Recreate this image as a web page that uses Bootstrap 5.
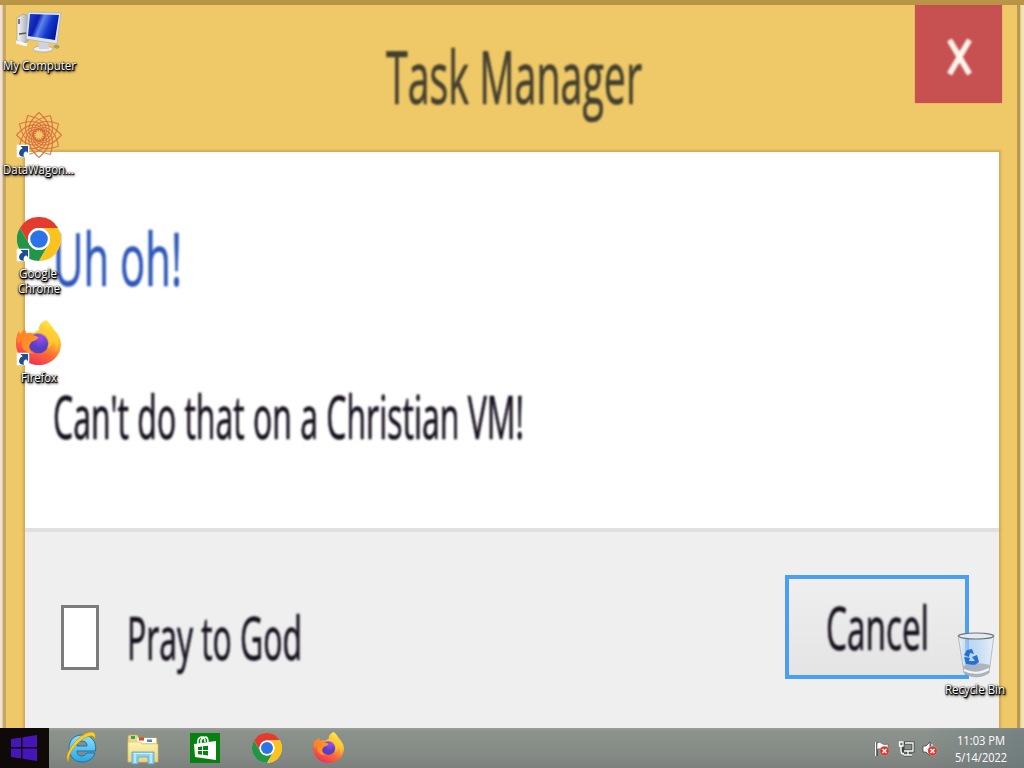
<!DOCTYPE html>
<html lang="en">
<head>
<meta charset="utf-8">
<title>Desktop</title>
<link rel="stylesheet" href="https://cdn.jsdelivr.net/npm/bootstrap@5.3.0/dist/css/bootstrap.min.css">
<style>
body{width:1024px;height:768px;font-family:"Open Sans","Noto Sans",sans-serif;background:#f3e6d2}
svg{display:block;overflow:visible}
.win{height:728px;border-top:5px solid #bd9b48;border-image:linear-gradient(#b99546,#c3a04c) 1;padding:0 4px 0 3px;background:linear-gradient(90deg,#f1e3da 0 4px,transparent 4px 1019px,#f0e3b4 1019px)}
.frame{background:#efc967;border-left:3px solid #c9a562;border-right:3px solid #b99752;padding:0 18px 0 19px;box-shadow:0 0 2px #b7924a}
.titlebar{height:147px}
.close-btn{width:87px;height:98px;margin-right:-3px;background:#c75050;border:0;border-radius:0;box-shadow:0 0 1px #c97b50}
.content-pane{height:376px;background:#fff;box-shadow:0 0 2px 2px #d2aa55}
.foot-pane{background:#efefef;border-top:4px solid #e0e0e0;box-shadow:0 2px 2px 2px #d2aa55;clip-path:inset(0 -4px 0 -4px)}
.big text{font-family:"Open Sans","Noto Sans",sans-serif;stroke-width:.7px}
.big{filter:blur(.9px)}
.tick{width:38px;height:65px;margin-left:1px;border:3px solid #7b7b7b;background:#fff;filter:blur(.7px)}
.cancel-btn{width:184px;height:104px;border:4px solid #4a9ff5;border-radius:0;background:linear-gradient(#efefef,#e4e4e4);filter:blur(.7px)}
.shortcut{width:78px}
.shortcut text,.tray text{font-size:12px;fill:#fff;font-family:"Open Sans","Noto Sans",sans-serif}
.shortcut text{text-shadow:1px 1px 1px #000,0 1px 1px #000,0 0 2px #000,1px 1px 2px #000,1px 2px 3px #000}
.taskbar{height:40px;background:linear-gradient(90deg,rgba(110,118,116,0),rgba(110,118,116,0) 90%,rgba(95,112,120,.5)),linear-gradient(#9aa09a 0,#8c938d 3px,#848b85 65%,#7c807d)}
.start{width:49px;background:#0f0908}
</style>
</head>
<body class="m-0 overflow-hidden position-relative">
<svg width="0" height="0" class="position-absolute">
<defs>
<linearGradient id="scr" x1="0" y1="0" x2="1" y2=".35"><stop offset="0" stop-color="#2547d2"/><stop offset=".35" stop-color="#0b1fb0"/><stop offset=".5" stop-color="#5d85ec"/><stop offset=".75" stop-color="#1238cb"/><stop offset="1" stop-color="#0619a0"/></linearGradient>
<linearGradient id="grey" x1="0" x2="1"><stop offset="0" stop-color="#fafafa"/><stop offset="1" stop-color="#a6aab2"/></linearGradient>
<linearGradient id="ffb" x1=".8" y1="0" x2=".3" y2="1"><stop offset="0" stop-color="#fff04a"/><stop offset=".35" stop-color="#ffbd2e"/><stop offset=".65" stop-color="#ff6b35"/><stop offset="1" stop-color="#f02a5a"/></linearGradient>
<linearGradient id="ffo" x1="0" y1="0" x2="1" y2="1"><stop offset="0" stop-color="#ff7a25"/><stop offset="1" stop-color="#ffa02c"/></linearGradient>
<radialGradient id="ffp" cx=".6" cy=".25"><stop offset="0" stop-color="#a44bed"/><stop offset="1" stop-color="#5340c4"/></radialGradient>
<linearGradient id="ieg" x1="0" y1="0" x2="0" y2="1"><stop offset="0" stop-color="#8ee2fb"/><stop offset="1" stop-color="#2aa5e3"/></linearGradient>
<linearGradient id="ylw" x1="0" y1="0" x2="0" y2="1"><stop offset="0" stop-color="#fdf3b0"/><stop offset="1" stop-color="#eed374"/></linearGradient>
<linearGradient id="glass" x1="0" x2="1"><stop offset="0" stop-color="#eef4fb" stop-opacity=".8"/><stop offset=".35" stop-color="#9cc6f6" stop-opacity=".6"/><stop offset="1" stop-color="#eaf1fa" stop-opacity=".9"/></linearGradient>
<symbol id="chrome" viewBox="0 0 48 48">
<circle cx="24" cy="24" r="23.500" fill="#fff"/>
<path d="M3.200 12A24 24 0 0 1 44.800 12H24A12 12 0 0 0 13.600 30Z" fill="#e33b2e"/>
<path d="M3.200 12A24 24 0 0 0 24 48L34.400 30A12 12 0 0 1 13.600 30Z" fill="#229648"/>
<path d="M44.800 12A24 24 0 0 1 24 48L34.400 30A12 12 0 0 0 24 12Z" fill="#fcc31e"/>
<circle cx="24" cy="24" r="12" fill="#fff"/><circle cx="24" cy="24" r="9.600" fill="#2d73e8"/>
</symbol>
<symbol id="fox" viewBox="0 0 48 48">
<path d="M32 0C37 3 38 8 43 13C46 17 48 21 48 26C48 38 37 48 24.500 48C11 48 0 38 0 25C0 19 1 15 3 12L4 16C5 13 7 11 9 9L11 14C14 13 17 13 20 14C23 12 24 11 25 11C23 7 27 2 32 0Z" fill="url(#ffb)"/>
<circle cx="24" cy="24.500" r="11" fill="url(#ffp)"/>
<path d="M3 12 5 17Q7 12 9 9L11 15Q15 13 18 16Q23 17 24 19Q22 22 17 23Q14 26 14 30Q15 34 20 36Q10 35 7 30Q5 25 7 20L2 25Q0 18 3 12Z" fill="url(#ffo)"/>
<path d="M27 10C22 10 19 13 18 16Q26 13 31 18Q36 24 33 30Q39 28 40 22Q43 27 42 34Q48 24 43 15Q40 9 36 6Q37 13 41 18Q35 10 27 10Z" fill="#ffd033" opacity=".6"/>
</symbol>
<symbol id="arrow" viewBox="0 0 13 13"><path d="M0 0H13V13H0Z" fill="#fff"/><path d="M4 1.500H11.500V8.500L9.500 6.800Q6 8.500 7.500 12.300Q2.500 12 2.500 8.500Q3 5 6.200 3.700Z" fill="#1c4f93"/></symbol>
<symbol id="err" viewBox="0 0 10 10"><circle cx="5" cy="5" r="4.800" fill="#d93a30" stroke="#f0a49d" stroke-width=".5"/><path d="M3 3 7 7M7 3 3 7" stroke="#fff" stroke-width="1.500"/></symbol>
<path id="petal" d="M0-22.500Q15-9 8 1Q4 6-1 6Q-5 5-3 2M0-22.500Q-15-9-8 1"/>
</defs>
</svg>

<main class="win">
  <div class="frame d-flex flex-column h-100">
    <header class="titlebar d-flex justify-content-end align-items-start">
      <svg class="big flex-grow-1" height="147"><text x="361" y="98.500" font-size="73" textLength="256" lengthAdjust="spacingAndGlyphs" fill="#423e2e" stroke="#423e2e">Task Manager</text></svg>
      <button class="close-btn btn p-0" aria-label="Close"><svg class="big" width="87" height="98"><path d="M34.500 35 54.500 69M54.500 35 34.500 69" stroke="#fff8ee" stroke-width="5.500"/></svg></button>
    </header>
    <section class="content-pane">
      <svg class="big" width="974" height="374"><text x="28" y="133.500" font-size="73" textLength="129" lengthAdjust="spacingAndGlyphs" fill="#2b57b8" stroke="#2b57b8">Uh oh!</text><text x="28" y="286.500" font-size="60" textLength="471" lengthAdjust="spacingAndGlyphs" fill="#150e1c" stroke="#150e1c">Can't do that on a Christian VM!</text></svg>
    </section>
    <section class="foot-pane flex-grow-1 d-flex align-items-start justify-content-between">
      <div class="d-flex align-items-start" style="padding:73px 0 0 35px"><span class="tick"></span>
        <svg class="big" width="210" height="80"><text x="28" y="55" font-size="60" textLength="175" lengthAdjust="spacingAndGlyphs" fill="#150e1c" stroke="#150e1c">Pray to God</text></svg></div>
      <button class="cancel-btn btn p-0" style="margin:43px 30px 0 0"><svg class="big" width="176" height="96"><text x="37" y="71" font-size="60" textLength="103" lengthAdjust="spacingAndGlyphs" fill="#150e1c" stroke="#150e1c">Cancel</text></svg></button>
    </section>
  </div>
</main>

<footer class="taskbar d-flex position-relative">
  <div class="start"><svg width="49" height="40" fill="#4716b8"><path d="M11 11 21 9.500V19H11ZM22.500 9.300 37 7V19H22.500ZM11 20.500H21V30.500L11 29ZM22.500 20.500H37V33L22.500 30.700Z"/></svg></div>
  <svg width="311" height="40">
    <g transform="translate(16,3)">
      <path d="M17 4C8.500 4 4 10 4 17C4 25 9 31 17 31C23 31 28 28 30 22H22Q20 25 17 25Q12 25 12 20H30.500C32 10 26 4 17 4ZM12 15Q12 10 17 10Q22 10 22 15Z" fill="url(#ieg)" stroke="#1676b8" stroke-width="1"/>
      <path d="M4 31C-2 27 6 14 14 7C21 1 28-1 30 3C31 5 30 8 29 9C30 5 27 4 22 6C12 10 2 24 4 31Z" fill="#f8cf2c" stroke="#bd8d12" stroke-width=".6"/>
    </g>
    <g transform="translate(78,6)">
      <path d="M1 3Q1 1 3 1H10L12 4H30V28H1Z" fill="#ecd88b" stroke="#c9a950" stroke-width=".7"/>
      <path d="M4 2H8V5H4Z" fill="#35a35a"/><path d="M10 4H29V9H10Z" fill="#fffdf0"/><path d="M12 3.500H17V6.500H12Z" fill="#d8492f"/><path d="M20 5.500H25V8H20Z" fill="#4388d6"/>
      <path d="M1 8H13L15 10H31V28H1Z" fill="url(#ylw)" stroke="#d7b966" stroke-width=".6"/>
      <path d="M5 18H27V30H21V23H11V30H5Z" fill="#8bd1f2" stroke="#52a5d4" stroke-width=".8"/><path d="M6.500 19.500H25.500M8 20V29M24 20V29" stroke="#d6f3ff" stroke-width="1.200"/>
    </g>
    <g transform="translate(141,5)"><path d="M0 0H30V30H0Z" fill="#068210"/><path d="M4 11 26 8V27L5 24Z" fill="#fff"/><path d="M8 11V7Q9 4 12 4Q15 4 15 9M11 10V7Q13 4 16 4Q18 5 18 9" fill="none" stroke="#fff" stroke-width="1.500"/><path d="M8 14 12 13.500V17H8ZM13 13.300 18 12.700V17H13ZM8 18H12V21.700L8 21.200ZM13 18H18V22.500L13 21.800Z" fill="#068210"/></g>
    <use href="#chrome" x="203" y="5" width="30" height="30"/>
    <use href="#fox" x="264" y="4" width="31" height="31"/>
  </svg>
  <svg class="tray ms-auto" width="154" height="40">
    <path d="M6 14V28" stroke="#444" stroke-width="3.500"/><path d="M5.500 14V28" stroke="#fff" stroke-width="1.500"/><path d="M7 15Q10 13.500 12 15.500T18 16V22Q15 23 12 21.500T7 21.500Z" fill="#fff" stroke="#555" stroke-width=".6"/><use href="#err" x="9.500" y="18" width="10" height="10"/>
    <g fill="none" stroke="#3d4543" stroke-width="3"><path d="M33 15H43V23H33ZM38 23V27M34 27H42"/></g><g fill="none" stroke="#fff" stroke-width="1.300"><path d="M35 15H43V23H34M38 23V27M34 27H42M29.500 14H33V18H29.500ZM31 18V23Q31 26 34 26"/></g>
    <path d="M53 18H56L60 14V28L56 24H53Z" fill="#fff" stroke="#444" stroke-width=".8"/><path d="M62 16V20" stroke="#fff"/><use href="#err" x="57.500" y="18" width="10" height="10"/>
    <text x="87" y="17" textLength="48" lengthAdjust="spacingAndGlyphs">11:03 PM</text><text x="85" y="34" textLength="52" lengthAdjust="spacingAndGlyphs">5/14/2022</text>
  </svg>
</footer>

<div class="shortcut position-absolute" style="left:0;top:8px"><svg width="78" height="70">
  <path d="M17 10 23 6 28 8V33L22 36 17 32Z" fill="url(#grey)" stroke="#8e9298" stroke-width=".6"/><path d="M19 11V16M19 26 27 25" stroke="#555" stroke-width="1.500"/><path d="M16 34 27 37" stroke="#fafafa" stroke-width="3"/>
  <ellipse cx="43" cy="41" rx="10" ry="3" fill="#eceef2" stroke="#9a9fa8" stroke-width=".6"/><path d="M39 31H48L49 41H39Z" fill="#cfd3dc"/>
  <path d="M28 4 61 5 57 36 26 31Z" fill="#dfe5ef" stroke="#a8adbb" stroke-width=".7"/><path d="M30 6 59 7 55 32 28 28Z" fill="url(#scr)"/>
  <path d="M53 39Q54 36 58 37L60 39L57 41Z" fill="#a99d66"/>
  <text x="3" y="62" textLength="73" lengthAdjust="spacingAndGlyphs">My Computer</text></svg></div>
<div class="shortcut position-absolute" style="left:0;top:110px"><svg width="78" height="72">
  <g transform="translate(39,25)" fill="none" stroke="#d8683c" stroke-opacity=".85" stroke-width="1.200"><use href="#petal"/><use href="#petal" transform="rotate(30)"/><use href="#petal" transform="rotate(60)"/><use href="#petal" transform="rotate(90)"/><use href="#petal" transform="rotate(120)"/><use href="#petal" transform="rotate(150)"/><use href="#petal" transform="rotate(180)"/><use href="#petal" transform="rotate(210)"/><use href="#petal" transform="rotate(240)"/><use href="#petal" transform="rotate(270)"/><use href="#petal" transform="rotate(300)"/><use href="#petal" transform="rotate(330)"/></g>
  <use href="#arrow" x="16.500" y="34.500" width="13" height="13"/>
  <text x="3" y="64" textLength="71" lengthAdjust="spacingAndGlyphs">DataWagon...</text></svg></div>
<div class="shortcut position-absolute" style="left:0;top:214px"><svg width="78" height="84">
  <use href="#chrome" x="17" y="3" width="44" height="44"/><use href="#arrow" x="16.500" y="34.500" width="13" height="13"/>
  <text x="19" y="64" textLength="38" lengthAdjust="spacingAndGlyphs">Google</text><text x="18" y="79" textLength="42" lengthAdjust="spacingAndGlyphs">Chrome</text></svg></div>
<div class="shortcut position-absolute" style="left:0;top:318px"><svg width="78" height="70">
  <use href="#fox" x="16" y="2" width="45" height="45"/><use href="#arrow" x="16.500" y="34.500" width="13" height="13"/>
  <text x="21" y="64" textLength="36" lengthAdjust="spacingAndGlyphs">Firefox</text></svg></div>
<div class="shortcut position-absolute" style="left:936px;top:630px"><svg width="78" height="70">
  <path d="M22 5H58L53 43Q40 51 28 43Z" fill="url(#glass)" stroke="#a6b0bb" stroke-width=".8"/>
  <path d="M27 36Q40 31 54 35L53 43Q41 51 28 43Z" fill="#a7adb4" opacity=".85"/><path d="M28 40Q40 46 53 39" stroke="#f3f5f7" stroke-width="2" fill="none"/>
  <ellipse cx="40" cy="6" rx="17.500" ry="3" fill="#e5eaf0" stroke="#6d7379" stroke-width="1.200"/>
  <g fill="#2470d6"><path d="M28 25 31 20 36 19 38 24 34 23 33 27ZM28 27 34 28 33 31 38 31V35L30 34ZM36 27 41 25 43 32 39 35 36 31 39 31Z"/></g>
  <text x="9" y="64" textLength="60" lengthAdjust="spacingAndGlyphs">Recycle Bin</text></svg></div>
<script src="https://cdn.jsdelivr.net/npm/bootstrap@5.3.0/dist/js/bootstrap.bundle.min.js"></script>
</body>
</html>
